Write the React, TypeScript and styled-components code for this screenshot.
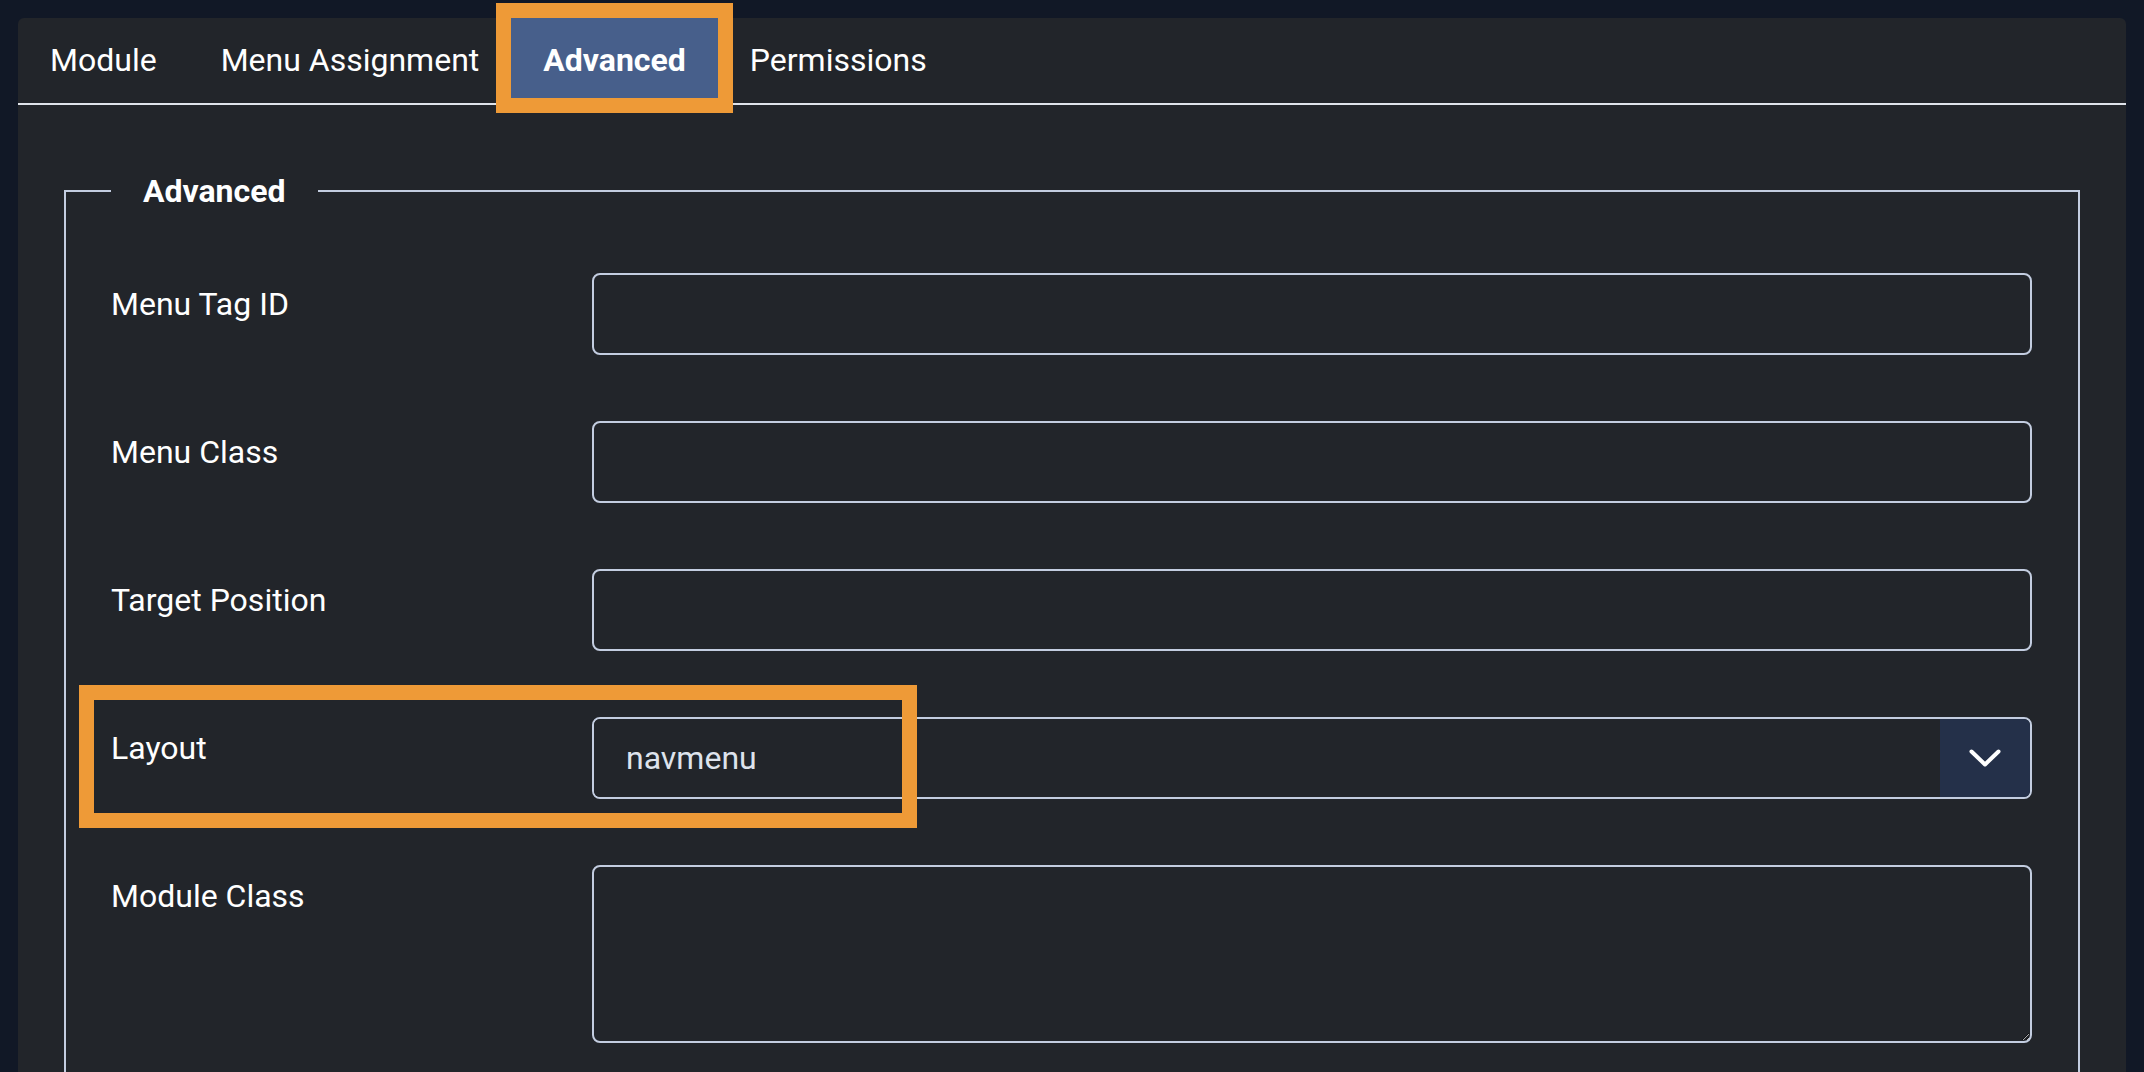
import styled, { createGlobalStyle } from 'styled-components'

const GlobalStyle = createGlobalStyle`
  html, body {
    margin: 0;
    padding: 0;
    background-color: #111826;
    overflow: hidden;
    font-family: Roboto, "Liberation Sans", sans-serif;
  }
`

type Field = {
  label: string,
  kind: 'input' | 'select' | 'textarea',
  value?: string,
  highlight?: boolean
}

const tabs = ['Module', 'Menu Assignment', 'Advanced', 'Permissions']

const fields: Field[] = [
  { label: 'Menu Tag ID', kind: 'input' },
  { label: 'Menu Class', kind: 'input' },
  { label: 'Target Position', kind: 'input' },
  { label: 'Layout', kind: 'select', value: 'navmenu', highlight: true },
  { label: 'Module Class', kind: 'textarea' }
]

export default function App () {
  return (
    <>
      <GlobalStyle />
      <Panel>
        <TabBar>
          {tabs.map(tab => (
            <Tab key={tab} $active={tab === 'Advanced'}>
              {tab}
              {tab === 'Advanced' && <TabMarker />}
            </Tab>
          ))}
        </TabBar>

        <Body>
          <Fieldset>
            <Legend>Advanced</Legend>
            <Rows>
              {fields.map(field => (
                <Row key={field.label}>
                  <Label>{field.label}</Label>
                  {field.kind === 'input' && <TextInput type="text" />}
                  {field.kind === 'textarea' && <TextArea />}
                  {field.kind === 'select' && (
                    <SelectBox>
                      <Select defaultValue={field.value}>
                        <option value="navmenu">navmenu</option>
                        <option value="default">default</option>
                      </Select>
                      <Caret>
                        <svg width="32" height="18" viewBox="0 0 32 18" fill="none">
                          <polyline points="2.5,2.5 16,15.5 29.5,2.5" stroke="#ffffff" strokeWidth="4" strokeLinecap="round" strokeLinejoin="round" />
                        </svg>
                      </Caret>
                    </SelectBox>
                  )}
                  {field.highlight && <RowMarker />}
                </Row>
              ))}
            </Rows>
          </Fieldset>
        </Body>
      </Panel>
    </>
  )
}

const Panel = styled.div`
  margin: 18px;
  min-height: 1200px;
  background-color: #22252a;
  border-radius: 6px;
`

const TabBar = styled.div`
  display: flex;
  align-items: flex-end;
  border-bottom: 2px solid #dfe3ea;
  padding-bottom: 1px;
`

const Tab = styled.div<{ $active: boolean }>`
  position: relative;
  display: flex;
  align-items: center;
  box-sizing: border-box;
  height: 84px;
  padding: 4px 32px 0;
  color: #ffffff;
  font-size: 32px;
  line-height: 1;
  font-weight: ${props => props.$active ? 700 : 400};
  background-color: ${props => props.$active ? '#475f8b' : 'transparent'};
  border-bottom: 4px solid ${props => props.$active ? '#7e97c5' : 'transparent'};
  white-space: nowrap;
  cursor: pointer;
`

const TabMarker = styled.span`
  position: absolute;
  inset: -15px;
  border: 15px solid #ee9a37;
  pointer-events: none;
`

const Body = styled.div`
  padding: 62px 46px 0;
`

const Fieldset = styled.fieldset`
  margin: 0;
  padding: 58px 46px 160px 45px;
  border: 2px solid #c3cde0;
  min-width: 0;
`

const Legend = styled.legend`
  padding: 0 32px;
  color: #ffffff;
  font-size: 32px;
  line-height: 1.5;
  font-weight: 700;
`

const Rows = styled.div`
  display: flex;
  flex-direction: column;
  gap: 66px;
`

const Row = styled.div`
  position: relative;
  display: grid;
  grid-template-columns: 481px 1fr;
  align-items: start;
`

const Label = styled.label`
  padding-top: 7px;
  color: #ffffff;
  font-size: 32px;
  line-height: 1.5;
`

const fieldBase = `
  box-sizing: border-box;
  width: 100%;
  margin: 0;
  border: 2px solid #c3cde0;
  border-radius: 8px;
  background-color: #22252a;
  color: #dee3ec;
  font-family: Roboto, "Liberation Sans", sans-serif;
  font-size: 32px;
  line-height: 1.5;
  outline: none;
`

const TextInput = styled.input`
  ${fieldBase}
  height: 82px;
  padding: 15px 32px;
`

const TextArea = styled.textarea`
  ${fieldBase}
  display: block;
  height: 178px;
  padding: 15px 32px;
  resize: vertical;
  color-scheme: dark;
`

const SelectBox = styled.div`
  display: flex;
  box-sizing: border-box;
  height: 82px;
  border: 2px solid #c3cde0;
  border-radius: 8px;
  overflow: hidden;
`

const Select = styled.select`
  flex: 1;
  min-width: 0;
  appearance: none;
  border: none;
  margin: 0;
  padding: 0 32px;
  background-color: #22252a;
  color: #dee3ec;
  font-family: Roboto, "Liberation Sans", sans-serif;
  font-size: 32px;
  line-height: 1.5;
  outline: none;
`

const Caret = styled.div`
  display: flex;
  align-items: center;
  justify-content: center;
  width: 90px;
  background-color: #243049;
`

const RowMarker = styled.span`
  position: absolute;
  left: -32px;
  top: -32px;
  width: 838px;
  height: 143px;
  box-sizing: border-box;
  border: 15px solid #ee9a37;
  pointer-events: none;
`
